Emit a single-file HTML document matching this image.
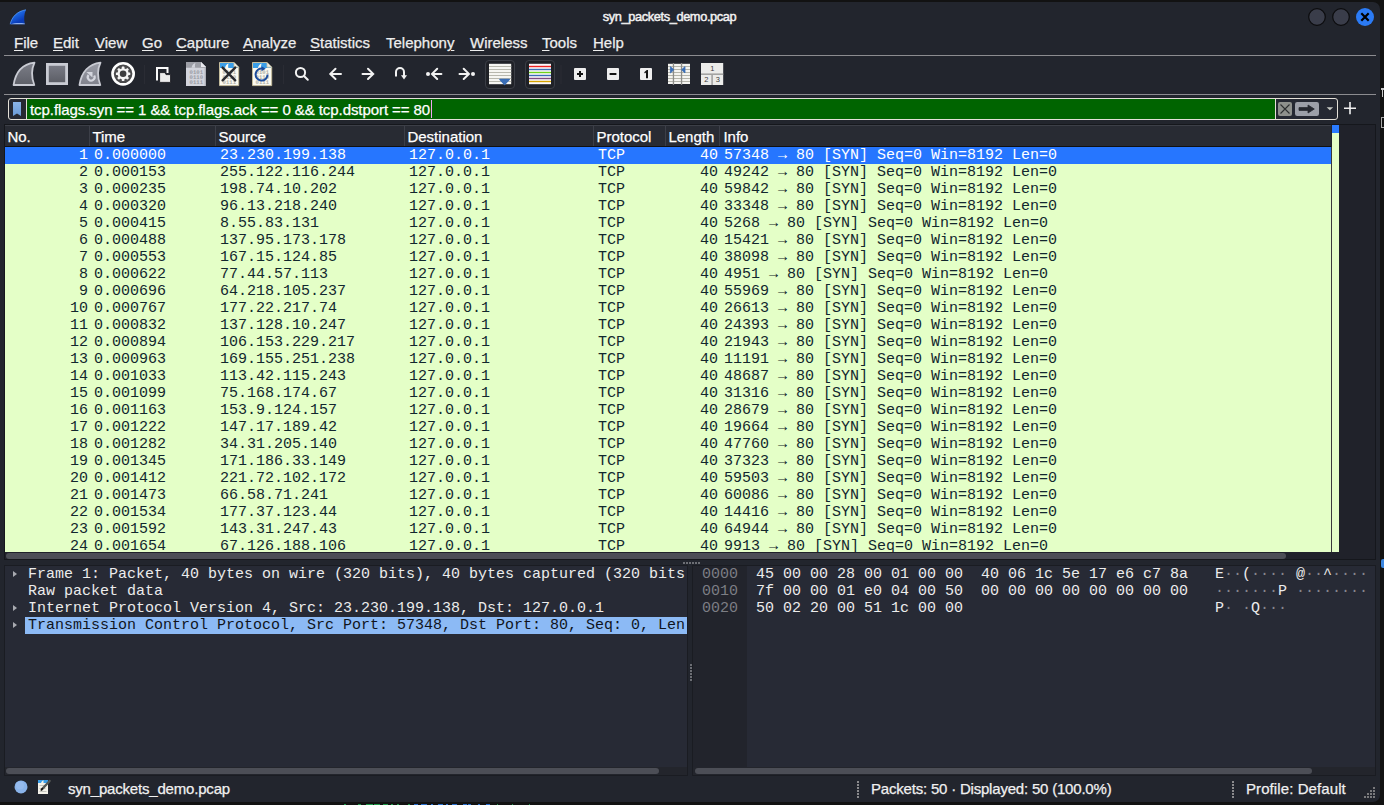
<!DOCTYPE html>
<html><head><meta charset="utf-8"><title>syn_packets_demo.pcap</title>
<style>
html,body{margin:0;padding:0;width:1384px;height:805px;overflow:hidden;background:#121212;}
body{position:relative;font-family:"Liberation Sans",sans-serif;}
.abs{position:absolute;}
#win{position:absolute;left:0;top:2px;width:1380px;height:800px;background:#22252d;border-radius:0 7px 7px 0;overflow:hidden;}
/* everything inside positioned relative to page: use page coords by offsetting */
.p{position:absolute;}
.title{position:absolute;left:0;width:1339px;top:9px;text-align:center;color:#f2f2f2;font:12.8px "Liberation Sans",sans-serif;letter-spacing:-0.38px;-webkit-text-stroke:0.45px #f2f2f2;}
.menu{position:absolute;top:33.6px;color:#eeeeee;font:15px "Liberation Sans",sans-serif;white-space:nowrap;}
.menu span{position:absolute;top:0;}
.menu u{text-decoration:underline;text-decoration-thickness:1.4px;text-underline-offset:2.2px;}
.hline{position:absolute;height:1px;background:#8c8c90;}
/* filter */
.fbox{position:absolute;left:8px;top:98px;width:1328px;height:20px;border:1px solid #e4e0d8;border-radius:3px;background:#252832;}
.fgreen{position:absolute;left:27px;top:99px;width:1248px;height:20px;background:#006400;}
.fsep{position:absolute;top:99px;width:1px;height:20px;background:#e4e0d8;}
.ftext{position:absolute;left:30px;top:101px;color:#ffffff;font:15px "Liberation Sans",sans-serif;white-space:nowrap;letter-spacing:-0.07px;}
/* packet list */
.plist{position:absolute;left:4px;top:124px;width:1372px;height:436px;background:#20222a;border:1px solid #15171c;box-sizing:border-box;}
.hdr{position:absolute;left:5px;top:125px;width:1326px;height:21px;background:#282b33;border-bottom:1px solid #111;box-shadow:inset 0 1px 0 #3c3f47;}
.hdr span{position:absolute;top:3px;color:#ffffff;margin-left:-0.6px;font:15px "Liberation Sans",sans-serif;}
.hsep{position:absolute;top:125px;width:1px;height:21px;background:#3c3f48;}
.rows{position:absolute;left:5px;top:147px;width:1326px;height:405px;overflow:hidden;background:#e4ffc7;}
.r{position:absolute;left:-5px;width:1331px;height:17px;background:#e4ffc7;color:#12272e;font:15px "Liberation Mono",monospace;white-space:nowrap;}
.r.sel{background:#2676ff;color:#ffffff;}
.c{position:absolute;top:0px;line-height:17px;}
.no{right:1243px;text-align:right;}
.tm{left:94px;}
.src{left:220px;}
.dst{left:409px;}
.pr{left:598px;}
.ln{left:664px;width:54px;text-align:right;}
.inf{left:724px;}
.vsb{position:absolute;left:1332px;top:125px;width:7px;height:427px;background:#e4ffc7;}
.vsbth{position:absolute;left:1332px;top:125px;width:7px;height:8px;background:#2a7bff;}
.vline{position:absolute;left:1331px;top:147px;width:1px;height:405px;background:#3a3a3a;}
.hsb{position:absolute;left:6px;top:553px;width:1280px;height:6px;border-radius:3px;background:#4c4e56;}
/* details */
.det{position:absolute;left:4px;top:565px;width:684px;height:211px;background:#272a35;border:1px solid #1a1c22;box-sizing:border-box;}
.drow{position:absolute;left:28px;height:17px;color:#ececec;font:15px/17px "Liberation Mono",monospace;white-space:nowrap;}
.dsel{position:absolute;left:25px;top:617px;width:662px;height:17px;background:#8cbaf5;}
.tri{position:absolute;left:13px;width:0;height:0;border-top:3.8px solid transparent;border-bottom:3.8px solid transparent;border-left:4.5px solid #a8aab0;}
.bytes{position:absolute;left:692px;top:565px;width:684px;height:211px;background:#272a35;box-sizing:border-box;border:1px solid #1a1c22;}
.boff{position:absolute;left:693px;top:566px;width:54px;height:201px;background:#22242c;}
.brow{position:absolute;height:17px;font:15px/17px "Liberation Mono",monospace;white-space:pre;color:#ececec;}
.hsb2{position:absolute;top:768px;height:6px;border-radius:3px;background:#4c4e56;}
/* status */
.status{position:absolute;top:779.5px;color:#f0f0f0;font:15px "Liberation Sans",sans-serif;white-space:nowrap;}
.dot{position:absolute;width:2px;height:2px;background:#6c6e74;}
.brow i{font-style:normal;color:#85878c;}
.trk{position:absolute;top:767px;height:8px;background:#23252c;}
.menu,.ftext,.status,.hdr span{-webkit-text-stroke:0.25px currentColor;}

</style></head><body>
<div id="win"></div>
<div class="p" style="left:344px;top:804px;width:2px;height:1px;background:#1f9a4a"></div><div class="p" style="left:358px;top:804px;width:3px;height:1px;background:#1f9a4a"></div><div class="p" style="left:366px;top:804px;width:7px;height:1px;background:#1f9a4a"></div><div class="p" style="left:374px;top:804px;width:6px;height:1px;background:#1f9a4a"></div><div class="p" style="left:383px;top:804px;width:5px;height:1px;background:#1f9a4a"></div><div class="p" style="left:391px;top:804px;width:2px;height:1px;background:#1f9a4a"></div><div class="p" style="left:397px;top:804px;width:2px;height:1px;background:#1f9a4a"></div><div class="p" style="left:408px;top:804px;width:2px;height:1px;background:#1f9a4a"></div><div class="p" style="left:414px;top:804px;width:4px;height:1px;background:#2a70d0"></div><div class="p" style="left:421px;top:804px;width:6px;height:1px;background:#2a70d0"></div><div class="p" style="left:431px;top:804px;width:2px;height:1px;background:#2a70d0"></div><div class="p" style="left:438px;top:804px;width:5px;height:1px;background:#2a70d0"></div><div class="p" style="left:446px;top:804px;width:2px;height:1px;background:#2a70d0"></div><div class="p" style="left:452px;top:804px;width:5px;height:1px;background:#2a70d0"></div><div class="p" style="left:463px;top:804px;width:4px;height:1px;background:#2a70d0"></div><div class="p" style="left:468px;top:804px;width:3px;height:1px;background:#2a70d0"></div><div class="p" style="left:478px;top:804px;width:2px;height:1px;background:#2a70d0"></div><div class="p" style="left:486px;top:804px;width:4px;height:1px;background:#2a70d0"></div><div class="p" style="left:497px;top:804px;width:1px;height:1px;background:#1f9a4a"></div><div class="p" style="left:512px;top:804px;width:1px;height:1px;background:#1f9a4a"></div><div class="p" style="left:529px;top:804px;width:1px;height:1px;background:#1f9a4a"></div><div class="p" style="left:1381px;top:559px;width:3px;height:9px;border-radius:2px 0 0 2px;background:#3a86e0"></div>
<div class="p" style="left:1381px;top:88px;width:3px;height:1.5px;background:#c8c8c8"></div>
<div class="p" style="left:1382px;top:88px;width:1.3px;height:9px;background:#c8c8c8"></div>
<div class="p" style="left:1381px;top:117px;width:3px;height:11px;border:1.2px solid #a8a8a8;border-right:none;box-sizing:border-box"></div>



<!-- title bar -->
<svg class="p" style="left:9px;top:8px" width="18" height="18" viewBox="0 0 18 18">
<defs><linearGradient id="fin" x1="0.2" y1="0" x2="0.8" y2="1"><stop offset="0" stop-color="#2a86ff"/><stop offset="0.75" stop-color="#0a3cb8"/><stop offset="1" stop-color="#0a3cb0"/></linearGradient></defs>
<path d="M1.2 16.2 C2.8 9 8 3.2 17 1.8 C15 6 14.8 11 15.8 16.2 Z" fill="url(#fin)"/>
<path d="M1.2 16.2 C2.8 9 8 3.2 17 1.8" fill="none" stroke="#5aa0ff" stroke-width="0.9" opacity="0.8"/>
<path d="M1.4 16.3 C5 14.8 11 14.6 15.8 15.4 V16.3 Z" fill="#9cbcf4" opacity="0.9"/>
</svg>
<div class="title">syn_packets_demo.pcap</div>
<svg class="p" style="left:1305px;top:5px" width="75" height="24" viewBox="0 0 75 24">
<circle cx="12" cy="12" r="8.3" fill="#3a3d4a" stroke="#0c0c0e" stroke-width="1.2"/>
<circle cx="36" cy="12" r="8.3" fill="#3a3d4a" stroke="#0c0c0e" stroke-width="1.2"/>
<circle cx="60" cy="12" r="9" fill="#2b7bf5"/>
<path d="M56.3 8.3 L63.7 15.7 M63.7 8.3 L56.3 15.7" stroke="#000" stroke-width="2.2"/>
</svg>

<!-- menu -->
<div class="menu">
<span style="left:14px"><u>F</u>ile</span>
<span style="left:53px"><u>E</u>dit</span>
<span style="left:95px"><u>V</u>iew</span>
<span style="left:142px"><u>G</u>o</span>
<span style="left:176px"><u>C</u>apture</span>
<span style="left:243px"><u>A</u>nalyze</span>
<span style="left:310px"><u>S</u>tatistics</span>
<span style="left:386px">Telephon<u>y</u></span>
<span style="left:470px"><u>W</u>ireless</span>
<span style="left:542px"><u>T</u>ools</span>
<span style="left:593px"><u>H</u>elp</span>
</div>
<div class="hline" style="left:4px;top:55px;width:1372px"></div>

<!-- toolbar -->
<svg class="p" style="left:0;top:56px" width="740" height="38" viewBox="0 56 740 38">
<defs>
<linearGradient id="gfin" x1="0" y1="0" x2="0" y2="1"><stop offset="0" stop-color="#7c7e88"/><stop offset="1" stop-color="#5e6068"/></linearGradient>
<linearGradient id="gsq" x1="0" y1="0" x2="0" y2="1"><stop offset="0" stop-color="#7a7c86"/><stop offset="1" stop-color="#5a5c64"/></linearGradient>
<linearGradient id="gfin2" x1="0" y1="0" x2="0" y2="1"><stop offset="0" stop-color="#9a9ca6"/><stop offset="1" stop-color="#80828c"/></linearGradient>
</defs>
<!-- fin 1 -->
<path d="M13.6 85 C15.5 72 23 64 34.5 62.6 C31.5 69 31.2 77 34.3 85 Z" fill="url(#gfin)" stroke="#c9cbd3" stroke-width="1.8" stroke-linejoin="round"/>
<!-- stop square -->
<rect x="47.4" y="64.4" width="19.2" height="19.2" fill="url(#gsq)" stroke="#c9cbd3" stroke-width="2.8"/>
<!-- fin 2 restart -->
<path d="M79.5 85 C81.4 72 89 64 100.5 62.6 C97.5 69 97.2 77 100.3 85 Z" fill="url(#gfin2)" stroke="#c9cbd3" stroke-width="1.8" stroke-linejoin="round"/>
<path d="M94.2 75.6 A3.4 3.4 0 1 1 88.6 75" fill="none" stroke="#d4d6de" stroke-width="2.2"/>
<path d="M86.3 72 H92.5 V77.6 Z" fill="#d4d6de"/>
<!-- gear -->
<circle cx="123.1" cy="73.8" r="10.6" fill="#4a4a4c" stroke="#ffffff" stroke-width="2.6"/>
<g transform="translate(123.1 73.8)">
<circle r="5.6" fill="#f4f4f4"/>
<g fill="#f4f4f4">
<rect x="-1.3" y="-7.2" width="2.6" height="3" rx="0.6"/>
<rect x="-1.3" y="-7.2" width="2.6" height="3" rx="0.6" transform="rotate(45)"/>
<rect x="-1.3" y="-7.2" width="2.6" height="3" rx="0.6" transform="rotate(90)"/>
<rect x="-1.3" y="-7.2" width="2.6" height="3" rx="0.6" transform="rotate(135)"/>
<rect x="-1.3" y="-7.2" width="2.6" height="3" rx="0.6" transform="rotate(180)"/>
<rect x="-1.3" y="-7.2" width="2.6" height="3" rx="0.6" transform="rotate(225)"/>
<rect x="-1.3" y="-7.2" width="2.6" height="3" rx="0.6" transform="rotate(270)"/>
<rect x="-1.3" y="-7.2" width="2.6" height="3" rx="0.6" transform="rotate(315)"/>
</g>
<circle r="3.3" fill="#3c3c3e"/>
</g>
<!-- separator -->
<rect x="144" y="65" width="1" height="19" fill="#2a2c34"/>
<!-- open -->
<path d="M157 80.5 V68 H167.5 V73" fill="none" stroke="#fafafa" stroke-width="2"/>
<path d="M159.6 82.4 V72.6 H165 L166 74.6 H170.6 V82.4 Z" fill="#ececec" stroke="#1a1b20" stroke-width="0.9"/>
<!-- doc gray -->
<path d="M186 62 H201 L206 67 V86 H186 Z" fill="#d2d4dc"/>
<path d="M186 62 H201 L206 67 V67.8 H186 Z" fill="#9c9ea6"/>
<path d="M191.5 67.8 C192 65 193.5 63.5 195.5 63 C194.8 64.5 194.8 66 195.2 67.8 Z" fill="#d2d4dc"/>
<path d="M201 62 V67 H206" fill="#e8e9ee"/>
<path d="M205.3 67 V86" stroke="#a8aab2" stroke-width="1.2"/>
<g fill="#9a9ca4" font-family="Liberation Mono" font-size="5.6" font-weight="bold" style="text-rendering:geometricPrecision">
<text x="189.6" y="74.3">0101</text><text x="189.6" y="79">0110</text><text x="189.6" y="83.6">0111</text>
</g>
<!-- doc close -->
<path d="M219.5 62.5 H234 L238.7 67.2 V85.6 H219.5 Z" fill="#fbfaf0" stroke="#c4bc9c" stroke-width="1"/>
<path d="M220 63 H233.6 L238.2 67.6 V68 H220 Z" fill="#3a9ee8"/>
<path d="M225 68 C225.5 65.5 226.8 64 228.6 63.5 C228 65 228 66.5 228.4 68 Z" fill="#fbfaf0"/>
<path d="M234 62.5 V67.2 H238.7" fill="#f0efe4" stroke="#c4bc9c" stroke-width="0.8"/>
<g fill="#b0b0a8" font-family="Liberation Mono" font-size="5.6" font-weight="bold" style="text-rendering:geometricPrecision">
<text x="222.6" y="74.3">0101</text><text x="222.6" y="79">0110</text><text x="222.6" y="83.6">0111</text>
</g>
<path d="M222.6 67.6 L235.2 80.3 M235.2 67.6 L222.6 80.3" stroke="#2a2c30" stroke-width="2.4" stroke-linecap="round"/>
<!-- doc reload -->
<path d="M252.5 62.5 H267 L271.7 67.2 V85.6 H252.5 Z" fill="#fbfaf0" stroke="#c4bc9c" stroke-width="1"/>
<path d="M253 63 H266.6 L271.2 67.6 V68 H253 Z" fill="#3a9ee8"/>
<path d="M258 68 C258.5 65.5 259.8 64 261.6 63.5 C261 65 261 66.5 261.4 68 Z" fill="#fbfaf0"/>
<path d="M267 62.5 V67.2 H271.7" fill="#f0efe4" stroke="#c4bc9c" stroke-width="0.8"/>
<g fill="#b0b0a8" font-family="Liberation Mono" font-size="5.6" font-weight="bold" style="text-rendering:geometricPrecision">
<text x="255.6" y="74.3">0101</text><text x="255.6" y="79">0110</text><text x="255.6" y="83.6">0111</text>
</g>
<path d="M267.6 74.6 A6 6 0 1 1 262.5 68.6" fill="none" stroke="#1c4d9c" stroke-width="2"/>
<path d="M261.5 66.2 L265.8 68.8 L261.5 71.2 Z" fill="#1c4d9c"/>
<!-- separator -->
<rect x="283" y="65" width="1" height="19" fill="#2a2c34"/>
<!-- search -->
<g fill="none" stroke="#f2f2f2" stroke-width="2" stroke-linecap="round">
<circle cx="300.5" cy="72.5" r="4.6"/>
<path d="M304 76 L307.8 79.8"/>
<!-- left arrow -->
<path d="M341 73.9 H330.5 M335.5 68.8 L330.3 73.9 L335.5 79"/>
<!-- right arrow -->
<path d="M362.5 73.9 H373 M368 68.8 L373.2 73.9 L368 79"/>
<!-- jump -->
<path d="M396 76.5 V72 A4 4 0 0 1 404 72 V76" stroke-linecap="butt"/>
<!-- first -->
<path d="M441.4 73.9 H432.5 M437.2 68.8 L432 73.9 L437.2 79"/>
<!-- last -->
<path d="M459.5 73.9 H468.4 M463.7 68.8 L468.9 73.9 L463.7 79"/>
</g>
<path d="M401 75.2 H407 L404 79.6 Z" fill="#f2f2f2"/>
<circle cx="428" cy="73.9" r="2" fill="#f2f2f2"/>
<circle cx="473" cy="73.9" r="2" fill="#f2f2f2"/>
<!-- autoscroll pressed -->
<rect x="485.5" y="60.5" width="29" height="28" rx="3.5" fill="#1f2127" stroke="#3b3e46" stroke-width="1"/>
<rect x="489" y="63.8" width="22.2" height="20.4" fill="#f6f6f2"/>
<g fill="#b8b8ae">
<rect x="489" y="66" width="22.2" height="1"/><rect x="489" y="69" width="22.2" height="1"/><rect x="489" y="72" width="22.2" height="1"/>
<rect x="489" y="75" width="22.2" height="1"/><rect x="489" y="78" width="22.2" height="1"/><rect x="489" y="81" width="22.2" height="1"/>
</g>
<path d="M499.8 79.4 H509.4 L504.6 84.6 Z" fill="#3a6eb6" stroke="#3a6eb6" stroke-width="1.2" stroke-linejoin="round"/>
<!-- colorize pressed -->
<rect x="525.5" y="60.5" width="29" height="28" rx="3.5" fill="#1f2127" stroke="#3b3e46" stroke-width="1"/>
<rect x="529" y="63.8" width="22" height="20.4" fill="#fbf8fb"/>
<rect x="529" y="65.8" width="22" height="1.4" fill="#ee2222"/>
<rect x="529" y="68.8" width="22" height="1.4" fill="#3a6eb6"/>
<rect x="529" y="71.8" width="22" height="1.4" fill="#6ed21c"/>
<rect x="529" y="74.8" width="22" height="1.4" fill="#3a6eb6"/>
<rect x="529" y="77.8" width="22" height="1.4" fill="#7e4a82"/>
<rect x="529" y="80.8" width="22" height="1.4" fill="#d4a200"/>
<rect x="520.5" y="65" width="1" height="19" fill="#262830"/>
<rect x="560.5" y="65" width="1" height="19" fill="#2a2c34"/>
<!-- zoom in/out/normal -->
<rect x="574" y="68" width="12" height="12" rx="1" fill="#eeeeee"/>
<path d="M577 74 H583 M580 71 V77" stroke="#111" stroke-width="2"/>
<rect x="607" y="68" width="12" height="12" rx="1" fill="#eeeeee"/>
<path d="M609.6 74 H616.4" stroke="#111" stroke-width="2"/>
<rect x="640" y="68" width="12" height="12" rx="1" fill="#eeeeee"/>
<path d="M644.2 72.2 L646.8 70 H648 V78.2 H646 V72.6 L644.9 73.4 Z" fill="#111"/>
<!-- resize columns -->
<rect x="668" y="63.8" width="22" height="20.2" fill="#f4f4f0"/>
<g fill="#b4b4aa">
<rect x="668" y="66" width="22" height="1"/><rect x="668" y="69" width="22" height="1"/><rect x="668" y="72" width="22" height="1"/>
<rect x="668" y="75" width="22" height="1"/><rect x="668" y="78" width="22" height="1"/><rect x="668" y="81" width="22" height="1"/>
</g>
<rect x="672.8" y="63" width="1.3" height="22" fill="#8c8c88"/>
<rect x="680.9" y="63" width="1.3" height="22" fill="#8c8c88"/>
<path d="M670.4 66.6 L673.8 69.8 L670.4 73 Z" fill="#3a6eb6" stroke="#3a6eb6" stroke-width="0.8" stroke-linejoin="round"/>
<path d="M685 66.6 L681.6 69.8 L685 73 Z" fill="#3a6eb6" stroke="#3a6eb6" stroke-width="0.8" stroke-linejoin="round"/>
<!-- layout -->
<rect x="701" y="63" width="22.2" height="22" fill="#ececea"/>
<rect x="701" y="73.4" width="22.2" height="1.6" fill="#a4a4a2"/>
<rect x="711.3" y="74" width="1.6" height="11" fill="#a4a4a2"/>
<g fill="#3c3c3c" font-family="Liberation Sans" font-size="7.5" text-anchor="middle">
<text x="712.3" y="71">1</text><text x="706.3" y="82.3">2</text><text x="717.8" y="82.3">3</text>
</g>
</svg>


<div class="hline" style="left:4px;top:94px;width:1372px"></div>

<!-- filter -->
<div class="fbox"></div>
<div class="fgreen"></div>
<div class="fsep" style="left:26px"></div>
<div class="fsep" style="left:1275px"></div>
<svg class="p" style="left:12px;top:101px" width="11" height="16" viewBox="0 0 11 16">
<defs><linearGradient id="bm" x1="0" y1="0" x2="0" y2="1"><stop offset="0" stop-color="#8ab4e8"/><stop offset="1" stop-color="#6a9ad6"/></linearGradient></defs>
<path d="M1 1 H9 V15 L5 12.6 L1 15 Z" fill="url(#bm)"/>
</svg>
<div class="ftext">tcp.flags.syn == 1 &amp;&amp; tcp.flags.ack == 0 &amp;&amp; tcp.dstport == 80</div>
<div class="p" style="left:431px;top:100px;width:1px;height:18px;background:#f2a6f2"></div>
<svg class="p" style="left:1270px;top:96px" width="100" height="26" viewBox="1270 96 100 26">
<rect x="1278" y="102" width="14" height="14" rx="2" fill="#8e908c"/>
<path d="M1280.5 104.5 L1289.5 113.5 M1289.5 104.5 L1280.5 113.5" stroke="#2c2e30" stroke-width="1.1"/>
<rect x="1295" y="102" width="24" height="14" rx="2.2" fill="#9c9fa8"/>
<path d="M1299 107.6 H1308 V105 L1314.3 109 L1308 113 V110.4 H1299 Z" fill="#262830" stroke="#262830" stroke-width="0.8" stroke-linejoin="round"/>
<path d="M1326.6 107.2 H1333.2 L1329.9 110.2 Z" fill="#c8cac4"/>
<path d="M1344 108.2 H1356 M1350 102 V114.3" stroke="#f0f0f0" stroke-width="1.6"/>
</svg>

<!-- packet list -->
<div class="plist"></div>
<div class="hdr"></div>
<div class="hdr" style="background:transparent;border:none;box-shadow:none">
<span style="left:3px">No.</span>
<span style="left:88px">Time</span>
<span style="left:214px">Source</span>
<span style="left:403px">Destination</span>
<span style="left:592px">Protocol</span>
<span style="left:664px">Length</span>
<span style="left:719px">Info</span>
</div>
<div class="hsep" style="left:89px"></div>
<div class="hsep" style="left:215px"></div>
<div class="hsep" style="left:404px"></div>
<div class="hsep" style="left:593px"></div>
<div class="hsep" style="left:665px"></div>
<div class="hsep" style="left:719px"></div>
<div class="rows">
<div class="r sel" style="top:0px"><span class="c no">1</span><span class="c tm">0.000000</span><span class="c src">23.230.199.138</span><span class="c dst">127.0.0.1</span><span class="c pr">TCP</span><span class="c ln">40</span><span class="c inf">57348 → 80 [SYN] Seq=0 Win=8192 Len=0</span></div>
<div class="r" style="top:17px"><span class="c no">2</span><span class="c tm">0.000153</span><span class="c src">255.122.116.244</span><span class="c dst">127.0.0.1</span><span class="c pr">TCP</span><span class="c ln">40</span><span class="c inf">49242 → 80 [SYN] Seq=0 Win=8192 Len=0</span></div>
<div class="r" style="top:34px"><span class="c no">3</span><span class="c tm">0.000235</span><span class="c src">198.74.10.202</span><span class="c dst">127.0.0.1</span><span class="c pr">TCP</span><span class="c ln">40</span><span class="c inf">59842 → 80 [SYN] Seq=0 Win=8192 Len=0</span></div>
<div class="r" style="top:51px"><span class="c no">4</span><span class="c tm">0.000320</span><span class="c src">96.13.218.240</span><span class="c dst">127.0.0.1</span><span class="c pr">TCP</span><span class="c ln">40</span><span class="c inf">33348 → 80 [SYN] Seq=0 Win=8192 Len=0</span></div>
<div class="r" style="top:68px"><span class="c no">5</span><span class="c tm">0.000415</span><span class="c src">8.55.83.131</span><span class="c dst">127.0.0.1</span><span class="c pr">TCP</span><span class="c ln">40</span><span class="c inf">5268 → 80 [SYN] Seq=0 Win=8192 Len=0</span></div>
<div class="r" style="top:85px"><span class="c no">6</span><span class="c tm">0.000488</span><span class="c src">137.95.173.178</span><span class="c dst">127.0.0.1</span><span class="c pr">TCP</span><span class="c ln">40</span><span class="c inf">15421 → 80 [SYN] Seq=0 Win=8192 Len=0</span></div>
<div class="r" style="top:102px"><span class="c no">7</span><span class="c tm">0.000553</span><span class="c src">167.15.124.85</span><span class="c dst">127.0.0.1</span><span class="c pr">TCP</span><span class="c ln">40</span><span class="c inf">38098 → 80 [SYN] Seq=0 Win=8192 Len=0</span></div>
<div class="r" style="top:119px"><span class="c no">8</span><span class="c tm">0.000622</span><span class="c src">77.44.57.113</span><span class="c dst">127.0.0.1</span><span class="c pr">TCP</span><span class="c ln">40</span><span class="c inf">4951 → 80 [SYN] Seq=0 Win=8192 Len=0</span></div>
<div class="r" style="top:136px"><span class="c no">9</span><span class="c tm">0.000696</span><span class="c src">64.218.105.237</span><span class="c dst">127.0.0.1</span><span class="c pr">TCP</span><span class="c ln">40</span><span class="c inf">55969 → 80 [SYN] Seq=0 Win=8192 Len=0</span></div>
<div class="r" style="top:153px"><span class="c no">10</span><span class="c tm">0.000767</span><span class="c src">177.22.217.74</span><span class="c dst">127.0.0.1</span><span class="c pr">TCP</span><span class="c ln">40</span><span class="c inf">26613 → 80 [SYN] Seq=0 Win=8192 Len=0</span></div>
<div class="r" style="top:170px"><span class="c no">11</span><span class="c tm">0.000832</span><span class="c src">137.128.10.247</span><span class="c dst">127.0.0.1</span><span class="c pr">TCP</span><span class="c ln">40</span><span class="c inf">24393 → 80 [SYN] Seq=0 Win=8192 Len=0</span></div>
<div class="r" style="top:187px"><span class="c no">12</span><span class="c tm">0.000894</span><span class="c src">106.153.229.217</span><span class="c dst">127.0.0.1</span><span class="c pr">TCP</span><span class="c ln">40</span><span class="c inf">21943 → 80 [SYN] Seq=0 Win=8192 Len=0</span></div>
<div class="r" style="top:204px"><span class="c no">13</span><span class="c tm">0.000963</span><span class="c src">169.155.251.238</span><span class="c dst">127.0.0.1</span><span class="c pr">TCP</span><span class="c ln">40</span><span class="c inf">11191 → 80 [SYN] Seq=0 Win=8192 Len=0</span></div>
<div class="r" style="top:221px"><span class="c no">14</span><span class="c tm">0.001033</span><span class="c src">113.42.115.243</span><span class="c dst">127.0.0.1</span><span class="c pr">TCP</span><span class="c ln">40</span><span class="c inf">48687 → 80 [SYN] Seq=0 Win=8192 Len=0</span></div>
<div class="r" style="top:238px"><span class="c no">15</span><span class="c tm">0.001099</span><span class="c src">75.168.174.67</span><span class="c dst">127.0.0.1</span><span class="c pr">TCP</span><span class="c ln">40</span><span class="c inf">31316 → 80 [SYN] Seq=0 Win=8192 Len=0</span></div>
<div class="r" style="top:255px"><span class="c no">16</span><span class="c tm">0.001163</span><span class="c src">153.9.124.157</span><span class="c dst">127.0.0.1</span><span class="c pr">TCP</span><span class="c ln">40</span><span class="c inf">28679 → 80 [SYN] Seq=0 Win=8192 Len=0</span></div>
<div class="r" style="top:272px"><span class="c no">17</span><span class="c tm">0.001222</span><span class="c src">147.17.189.42</span><span class="c dst">127.0.0.1</span><span class="c pr">TCP</span><span class="c ln">40</span><span class="c inf">19664 → 80 [SYN] Seq=0 Win=8192 Len=0</span></div>
<div class="r" style="top:289px"><span class="c no">18</span><span class="c tm">0.001282</span><span class="c src">34.31.205.140</span><span class="c dst">127.0.0.1</span><span class="c pr">TCP</span><span class="c ln">40</span><span class="c inf">47760 → 80 [SYN] Seq=0 Win=8192 Len=0</span></div>
<div class="r" style="top:306px"><span class="c no">19</span><span class="c tm">0.001345</span><span class="c src">171.186.33.149</span><span class="c dst">127.0.0.1</span><span class="c pr">TCP</span><span class="c ln">40</span><span class="c inf">37323 → 80 [SYN] Seq=0 Win=8192 Len=0</span></div>
<div class="r" style="top:323px"><span class="c no">20</span><span class="c tm">0.001412</span><span class="c src">221.72.102.172</span><span class="c dst">127.0.0.1</span><span class="c pr">TCP</span><span class="c ln">40</span><span class="c inf">59503 → 80 [SYN] Seq=0 Win=8192 Len=0</span></div>
<div class="r" style="top:340px"><span class="c no">21</span><span class="c tm">0.001473</span><span class="c src">66.58.71.241</span><span class="c dst">127.0.0.1</span><span class="c pr">TCP</span><span class="c ln">40</span><span class="c inf">60086 → 80 [SYN] Seq=0 Win=8192 Len=0</span></div>
<div class="r" style="top:357px"><span class="c no">22</span><span class="c tm">0.001534</span><span class="c src">177.37.123.44</span><span class="c dst">127.0.0.1</span><span class="c pr">TCP</span><span class="c ln">40</span><span class="c inf">14416 → 80 [SYN] Seq=0 Win=8192 Len=0</span></div>
<div class="r" style="top:374px"><span class="c no">23</span><span class="c tm">0.001592</span><span class="c src">143.31.247.43</span><span class="c dst">127.0.0.1</span><span class="c pr">TCP</span><span class="c ln">40</span><span class="c inf">64944 → 80 [SYN] Seq=0 Win=8192 Len=0</span></div>
<div class="r" style="top:391px"><span class="c no">24</span><span class="c tm">0.001654</span><span class="c src">67.126.188.106</span><span class="c dst">127.0.0.1</span><span class="c pr">TCP</span><span class="c ln">40</span><span class="c inf">9913 → 80 [SYN] Seq=0 Win=8192 Len=0</span></div>
</div>
<div class="vline"></div>
<div class="vsb"></div>
<div class="vsbth"></div>
<div class="hsb"></div>

<!-- details -->
<div class="det"></div>
<div class="dsel"></div>
<div class="tri" style="top:570.7px"></div>
<div class="tri" style="top:604.7px"></div>
<div class="tri" style="top:621.7px"></div>
<div class="drow" style="top:566px">Frame 1: Packet, 40 bytes on wire (320 bits), 40 bytes captured (320 bits</div>
<div class="drow" style="top:583px">Raw packet data</div>
<div class="drow" style="top:600px">Internet Protocol Version 4, Src: 23.230.199.138, Dst: 127.0.0.1</div>
<div class="drow" style="top:617px;color:#10141c">Transmission Control Protocol, Src Port: 57348, Dst Port: 80, Seq: 0, Len</div>
<div class="trk" style="left:5px;width:682px"></div><div class="hsb2" style="left:6px;width:653px"></div>

<!-- bytes -->
<div class="bytes"></div>
<div class="boff"></div>
<div class="brow" style="left:702px;top:566px;color:#7c7e84">0000</div>
<div class="brow" style="left:702px;top:583px;color:#7c7e84">0010</div>
<div class="brow" style="left:702px;top:600px;color:#7c7e84">0020</div>
<div class="brow" style="left:756px;top:566px">45 00 00 28 00 01 00 00  40 06 1c 5e 17 e6 c7 8a</div>
<div class="brow" style="left:756px;top:583px">7f 00 00 01 e0 04 00 50  00 00 00 00 00 00 00 00</div>
<div class="brow" style="left:756px;top:600px">50 02 20 00 51 1c 00 00</div>
<div class="brow" style="left:1215px;top:566px">E<i>··</i>(<i>····</i> @<i>··</i>^<i>····</i></div>
<div class="brow" style="left:1215px;top:583px"><i>·······</i>P <i>········</i></div>
<div class="brow" style="left:1215px;top:600px">P<i>·</i> <i>·</i>Q<i>···</i></div>
<div class="trk" style="left:693px;width:682px"></div><div class="hsb2" style="left:695px;width:617px"></div>

<div class="dot" style="left:683px;top:562px"></div><div class="dot" style="left:686px;top:562px"></div><div class="dot" style="left:689px;top:562px"></div><div class="dot" style="left:692px;top:562px"></div><div class="dot" style="left:695px;top:562px"></div><div class="dot" style="left:698px;top:562px"></div><div class="dot" style="left:690px;top:664px"></div><div class="dot" style="left:690px;top:667px"></div><div class="dot" style="left:690px;top:670px"></div><div class="dot" style="left:690px;top:673px"></div><div class="dot" style="left:690px;top:676px"></div><div class="dot" style="left:690px;top:679px"></div>
<!-- status -->
<svg class="p" style="left:10px;top:776px" width="45" height="24" viewBox="10 776 45 24">
<defs><linearGradient id="gled" x1="0" y1="0" x2="0.3" y2="1"><stop offset="0" stop-color="#b4cef0"/><stop offset="1" stop-color="#6e a4e4"/></linearGradient></defs>
<circle cx="21" cy="786.9" r="6.5" fill="#8ab4ea"/>
<circle cx="20" cy="785.5" r="4" fill="#9cc0ee" opacity="0.6"/>
<rect x="38" y="780" width="10" height="14" fill="#f4f2ea"/>
<rect x="38" y="780" width="10" height="3" fill="#3a9ee8"/>
<path d="M41 783 C41.5 781.5 42.5 780.6 43.5 780.3 V783 Z" fill="#f4f2ea"/>
<g fill="#c0c0b8"><rect x="39.5" y="785" width="6" height="0.9"/><rect x="39.5" y="788" width="6" height="0.9"/><rect x="39.5" y="791" width="7" height="0.9"/></g>
<path d="M42 789.3 L49.6 781" stroke="#555855" stroke-width="2.4" stroke-linecap="round"/>
<path d="M41.3 790 L42.3 788.6" stroke="#111" stroke-width="1.6" stroke-linecap="round"/>
</svg>
<div class="dot" style="left:857px;top:781px;background:#8a8a8c"></div><div class="dot" style="left:857px;top:784px;background:#8a8a8c"></div><div class="dot" style="left:857px;top:787px;background:#8a8a8c"></div><div class="dot" style="left:857px;top:790px;background:#8a8a8c"></div><div class="dot" style="left:857px;top:793px;background:#8a8a8c"></div><div class="dot" style="left:857px;top:796px;background:#8a8a8c"></div><div class="dot" style="left:1232px;top:781px;background:#8a8a8c"></div><div class="dot" style="left:1232px;top:784px;background:#8a8a8c"></div><div class="dot" style="left:1232px;top:787px;background:#8a8a8c"></div><div class="dot" style="left:1232px;top:790px;background:#8a8a8c"></div><div class="dot" style="left:1232px;top:793px;background:#8a8a8c"></div><div class="dot" style="left:1232px;top:796px;background:#8a8a8c"></div><div class="dot" style="left:1373px;top:787px;background:#7a7a7c"></div><div class="dot" style="left:1373px;top:790px;background:#7a7a7c"></div><div class="dot" style="left:1370px;top:790px;background:#7a7a7c"></div><div class="dot" style="left:1373px;top:793px;background:#7a7a7c"></div><div class="dot" style="left:1370px;top:793px;background:#7a7a7c"></div><div class="dot" style="left:1367px;top:793px;background:#7a7a7c"></div><div class="dot" style="left:1373px;top:796px;background:#7a7a7c"></div><div class="dot" style="left:1370px;top:796px;background:#7a7a7c"></div><div class="dot" style="left:1367px;top:796px;background:#7a7a7c"></div><div class="dot" style="left:1364px;top:796px;background:#7a7a7c"></div>
<div class="status" style="left:68px;letter-spacing:-0.19px">syn_packets_demo.pcap</div>
<div class="status" style="left:871px;letter-spacing:-0.2px">Packets: 50 · Displayed: 50 (100.0%)</div>
<div class="status" style="left:1246px;letter-spacing:0.09px">Profile: Default</div>

</body></html>
